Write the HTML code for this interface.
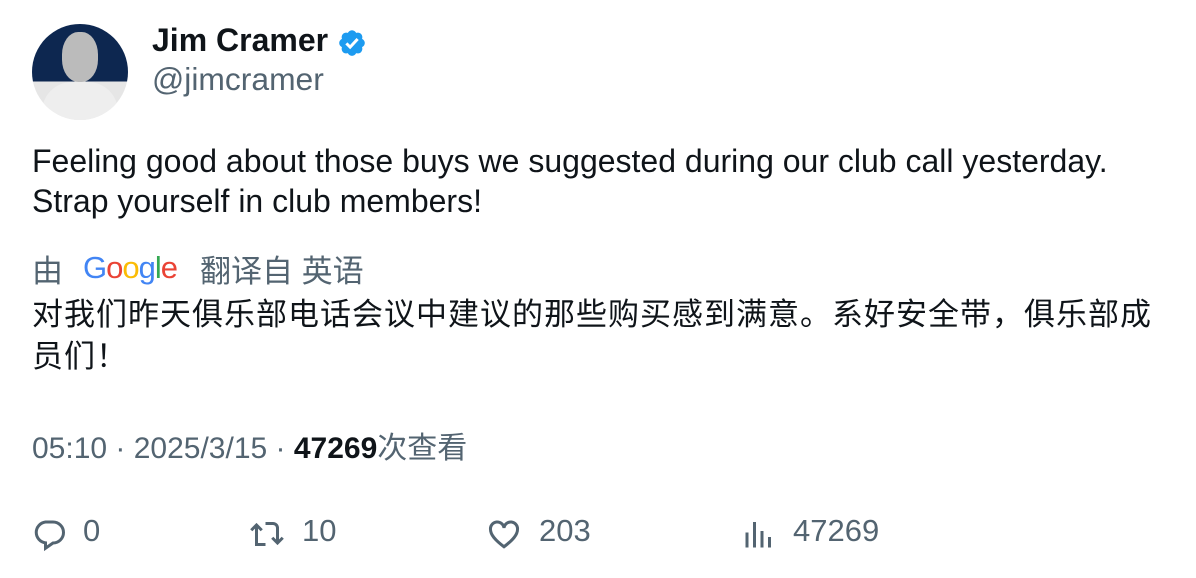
<!DOCTYPE html>
<html><head><meta charset="utf-8"><style>
body{margin:0;width:1196px;height:578px;background:#fff;font-family:"Liberation Sans","Noto Sans CJK SC",sans-serif;position:relative;overflow:hidden}
.a{position:absolute;white-space:nowrap}
.g{color:#536471}
.ic{position:absolute;fill:none;stroke:#536471;stroke-width:2}
</style></head><body>
<div class="a" style="left:32px;top:24px;width:96px;height:96px;border-radius:50%;background:linear-gradient(#0d2750 0 60%,#e6e6e6 60%);overflow:hidden">
<div style="position:absolute;left:10px;top:58px;width:76px;height:50px;background:#eee;border-radius:30px 30px 0 0"></div>
<div style="position:absolute;left:30px;top:8px;width:36px;height:50px;background:#bbb;border-radius:45%"></div>
</div>
<div class="a" style="left:152px;top:22px;font-size:32px;font-weight:bold;color:#0f1419">Jim Cramer</div>
<svg class="a" style="left:337px;top:28px" width="30" height="30" viewBox="0 0 24 24"><path fill="#1d9bf0" d="M22.25 12c0-1.43-.88-2.67-2.19-3.34.46-1.39.2-2.9-.81-3.91s-2.52-1.27-3.91-.81c-.66-1.31-1.91-2.19-3.34-2.19s-2.67.88-3.33 2.19c-1.4-.46-2.91-.2-3.92.81s-1.26 2.52-.8 3.91C2.63 9.33 1.75 10.57 1.75 12s.88 2.67 2.19 3.34c-.46 1.39-.21 2.9.8 3.91s2.52 1.26 3.91.81c.67 1.31 1.91 2.19 3.34 2.19s2.68-.88 3.34-2.19c1.39.45 2.9.2 3.91-.81s1.27-2.52.81-3.91c1.31-.67 2.19-1.91 2.19-3.34z"/><path d="M7.5 12.3l3 3 6-6.5" stroke="#fff" stroke-width="2.4" fill="none"/></svg>
<div class="a g" style="left:152px;top:61px;font-size:31.8px">@jimcramer</div>
<div class="a" style="left:32px;top:141px;font-size:32px;line-height:40px;color:#0f1419">Feeling good about those buys we suggested during our club call yesterday.<br>Strap yourself in club members!</div>
<div class="a g" style="left:32px;top:246px;font-size:31px">由</div>
<div class="a" style="left:83px;top:250px;font-size:31px;letter-spacing:-1px"><span style="color:#4285f4">G</span><span style="color:#ea4335">o</span><span style="color:#fbbc05">o</span><span style="color:#4285f4">g</span><span style="color:#34a853">l</span><span style="color:#ea4335">e</span></div>
<div class="a g" style="left:200px;top:246px;font-size:31px">翻译自 英语</div>
<div class="a" style="left:32px;top:294px;font-size:31px;line-height:42px;letter-spacing:1px;color:#0f1419">对我们昨天俱乐部电话会议中建议的那些购买感到满意。系好安全带，俱乐部成<br>员们！</div>
<div class="a g" style="left:32px;top:423px;font-size:30px">05:10 · 2025/3/15 · <b style="color:#0f1419">47269</b>次查看</div>
<svg class="ic" style="left:32px;top:516px" width="36" height="36" viewBox="0 0 24 24"><path d="M9 4h5a7 7 0 010 14l-5 3.5v-3.6A7 7 0 019 4z"/></svg>
<div class="a g" style="left:83px;top:513px;font-size:31px">0</div>
<svg class="ic" style="left:248px;top:516px" width="38" height="36" viewBox="0 0 24 24"><path d="M5 20V6M1.5 9.5L5 6l3.5 3.5M11 5h5a3 3 0 013 3v10M15.5 14.5L19 18l3.5-3.5M5 19h6"/></svg>
<div class="a g" style="left:302px;top:513px;font-size:31px">10</div>
<svg class="ic" style="left:486px;top:516px" width="36" height="36" viewBox="0 0 24 24"><path d="M12 20.5C6 16 3 12.5 3 9a4.5 4.5 0 019-1 4.5 4.5 0 019 1c0 3.5-3 7-9 11.5z"/></svg>
<div class="a g" style="left:539px;top:513px;font-size:31px">203</div>
<svg class="ic" style="left:741px;top:516px" width="36" height="36" viewBox="0 0 24 24"><path d="M4 21V11M9 21V4M14 21V10M19 21V14"/></svg>
<div class="a g" style="left:793px;top:513px;font-size:31px">47269</div>
</body></html>
